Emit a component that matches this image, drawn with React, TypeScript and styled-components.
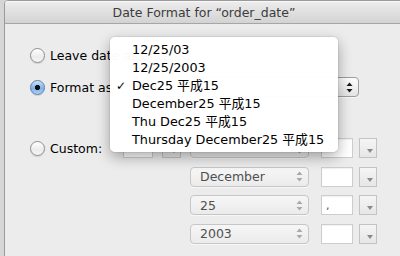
import React from "react";
import styled, { createGlobalStyle } from "styled-components";

const GlobalStyle = createGlobalStyle`
  html, body {
    margin: 0;
    padding: 0;
    width: 400px;
    height: 256px;
    overflow: hidden;
    background: #d6d6d6;
  }
  body {
    font-family: "DejaVu Sans", "Noto Sans CJK JP", sans-serif;
    font-size: 12.5px;
    color: #000;
  }
`;

const Window = styled.div`
  position: relative;
  margin-left: 4px;
  width: 400px;
  height: 258px;
  box-sizing: border-box;
  border: 1px solid #9a9a9a;
  border-radius: 4px 4px 0 0;
  background: #ececec;
  overflow: hidden;
`;

const TitleBar = styled.div`
  height: 22px;
  border-bottom: 1px solid #a6a6a6;
  background: linear-gradient(#ededed, #d3d3d3);
  display: flex;
  align-items: center;
  justify-content: center;
  font-size: 12.5px;
  color: #3c3c3c;
  box-shadow: inset 0 1px 0 #f8f8f8;
`;

const Content = styled.div`
  padding: 24px 0 0 25px;
  display: flex;
  flex-direction: column;
`;

const OptionRow = styled.div<{ $h: number; $top: number }>`
  display: flex;
  align-items: center;
  height: ${(p) => p.$h}px;
  margin-top: ${(p) => p.$top}px;
`;

const Radio = styled.span<{ $on?: boolean }>`
  flex: none;
  width: 15px;
  height: 15px;
  box-sizing: border-box;
  border-radius: 50%;
  border: 1px solid ${(p) => (p.$on ? "#5a7fae" : "#8e8e8e")};
  background: ${(p) =>
    p.$on
      ? "radial-gradient(circle at 50% 50%, #111 0 2.4px, transparent 2.9px), linear-gradient(#cfe4fb, #7fb1ea 55%, #a9d0f6)"
      : "linear-gradient(#ffffff, #ececec 60%, #f6f6f6)"};
  box-shadow: 0 1px 1px rgba(0, 0, 0, 0.12);
`;

const Label = styled.span<{ $w?: number }>`
  margin-left: 5px;
  width: ${(p) => (p.$w ? `${p.$w}px` : "auto")};
  flex: none;
  white-space: nowrap;
`;

const Popup = styled.div<{ $w: number; $disabled?: boolean }>`
  flex: none;
  width: ${(p) => p.$w}px;
  height: 20px;
  box-sizing: border-box;
  border: 1px solid ${(p) => (p.$disabled ? "#c6c6c6" : "#9d9d9d")};
  border-radius: 4px;
  background: ${(p) =>
    p.$disabled
      ? "linear-gradient(#f6f6f6, #ebebeb)"
      : "linear-gradient(#fdfdfd, #e4e4e4)"};
  display: flex;
  align-items: center;
  padding: 0 5px 0 9px;
  color: ${(p) => (p.$disabled ? "#4f4f4f" : "#000")};
  box-shadow: 0 1px 0 rgba(255, 255, 255, 0.6);
`;

const PopupText = styled.span`
  flex: 1;
`;

const Field = styled.div<{ $w: number; $ml: number }>`
  flex: none;
  width: ${(p) => p.$w}px;
  height: 20px;
  margin-left: ${(p) => p.$ml}px;
  box-sizing: border-box;
  border: 1px solid #cdcdcd;
  background: #fff;
  box-shadow: inset 0 1px 1px rgba(0, 0, 0, 0.06);
  font-size: 11px;
  color: #444;
  padding: 3px 0 0 4px;
`;

const SmallButton = styled.div<{ $w: number; $ml: number }>`
  flex: none;
  width: ${(p) => p.$w}px;
  height: 20px;
  margin-left: ${(p) => p.$ml}px;
  box-sizing: border-box;
  border: 1px solid #c3c3c3;
  background: linear-gradient(#f5f5f5, #e6e6e6);
  display: flex;
  align-items: flex-end;
  justify-content: flex-end;
  padding: 0 3px 4px 0;
`;

const CustomBlock = styled.div`
  display: flex;
  align-items: flex-start;
  margin-top: 41px;
`;

const CustomLead = styled.div`
  display: flex;
  align-items: center;
  height: 20px;
`;

const CustomRows = styled.div`
  display: flex;
  flex-direction: column;
  gap: 8.5px;
  margin-left: 9px;
`;

const CustomRow = styled.div`
  display: flex;
  align-items: center;
  height: 20px;
`;

const Menu = styled.div`
  position: absolute;
  left: 105px;
  top: 36px;
  width: 228px;
  padding: 4px 0 3px;
  box-sizing: border-box;
  background: rgba(255, 255, 255, 0.975);
  border-radius: 5px;
  box-shadow: 0 5px 14px rgba(0, 0, 0, 0.33), 0 0 0 1px rgba(0, 0, 0, 0.06);
`;

const MenuItem = styled.div`
  position: relative;
  height: 18px;
  line-height: 18px;
  padding-left: 22px;
  white-space: nowrap;
  font-size: 12.8px;
  color: #000;
`;

const Check = styled.span`
  position: absolute;
  left: 6px;
  top: 0;
  font-size: 12px;
`;

const Arrows = ({ color }: { color: string }) => (
  <svg width="7" height="11" viewBox="0 0 7 11">
    <path d="M3.5 0.5 L6.5 4 L0.5 4 Z" fill={color} />
    <path d="M0.5 7 L6.5 7 L3.5 10.5 Z" fill={color} />
  </svg>
);

const DownTick = () => (
  <svg width="6" height="4" viewBox="0 0 6 4">
    <path d="M0 0 L6 0 L3 4 Z" fill="#8a8a8a" />
  </svg>
);

const menuItems = [
  "12/25/03",
  "12/25/2003",
  "Dec25 平成15",
  "December25 平成15",
  "Thu Dec25 平成15",
  "Thursday December25 平成15",
];

// first row sits under the open menu, so its value is not shown
const customRows = [
  { id: "weekday", value: "", sep: "" },
  { id: "month", value: "December", sep: "" },
  { id: "day", value: "25", sep: "," },
  { id: "year", value: "2003", sep: "" },
];

export default function App() {
  return (
    <>
      <GlobalStyle />
      <Window>
        <TitleBar>Date Format for “order_date”</TitleBar>
        <Content>
          <OptionRow $h={15} $top={0}>
            <Radio />
            <Label>Leave date as entered</Label>
          </OptionRow>
          <OptionRow $h={20} $top={14}>
            <Radio $on />
            <Label $w={72}>Format as</Label>
            <Popup $w={237}>
              <PopupText />
              <Arrows color="#1a1a1a" />
            </Popup>
          </OptionRow>
          <CustomBlock>
            <CustomLead>
              <Radio />
              <Label $w={72}>Custom:</Label>
              <Field $w={30} $ml={1} />
              <SmallButton $w={19} $ml={9}>
                <DownTick />
              </SmallButton>
            </CustomLead>
            <CustomRows>
              {customRows.map((r) => (
                <CustomRow key={r.id}>
                  <Popup $w={119} $disabled>
                    <PopupText>{r.value}</PopupText>
                    <Arrows color="#a9a9a9" />
                  </Popup>
                  <Field $w={32} $ml={12}>{r.sep}</Field>
                  <SmallButton $w={18} $ml={6}>
                    <DownTick />
                  </SmallButton>
                </CustomRow>
              ))}
            </CustomRows>
          </CustomBlock>
        </Content>
        <Menu>
          {menuItems.map((item, i) => (
            <MenuItem key={item}>
              {i === 2 && <Check>✓</Check>}
              {item}
            </MenuItem>
          ))}
        </Menu>
      </Window>
    </>
  );
}
